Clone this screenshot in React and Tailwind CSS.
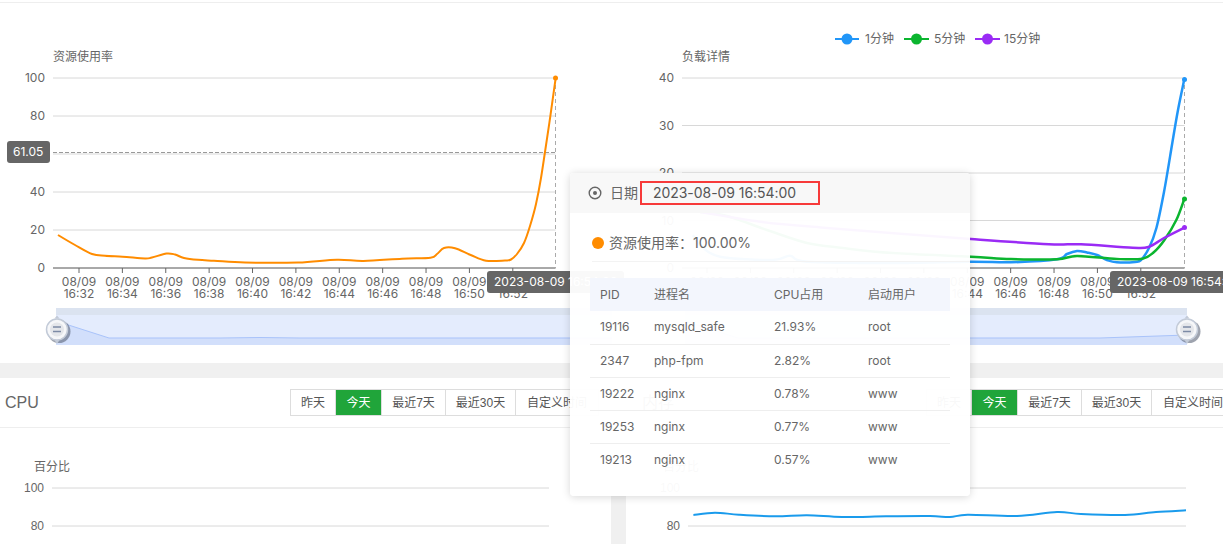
const smooth = (pts) => {
  let d = `M${pts[0][0]} ${pts[0][1]}`;
  for (let i = 0; i < pts.length - 1; i++) {
    const p0 = pts[i - 1] || pts[i];
    const p1 = pts[i];
    const p2 = pts[i + 1];
    const p3 = pts[i + 2] || p2;
    const c1x = p1[0] + (p2[0] - p0[0]) / 6;
    const c1y = p1[1] + (p2[1] - p0[1]) / 6;
    const c2x = p2[0] - (p3[0] - p1[0]) / 6;
    const c2y = p2[1] - (p3[1] - p1[1]) / 6;
    d += ` C${c1x.toFixed(1)} ${c1y.toFixed(1)} ${c2x.toFixed(1)} ${c2y.toFixed(1)} ${p2[0]} ${p2[1]}`;
  }
  return d;
};

const orange = [[58,235],[75,245],[92,254],[105,255.8],[122.5,256.7],[145,258.5],[152,257.5],[166.5,253.5],[175,254.5],[184,258],[198,259.8],[214,260.7],[245,262.5],[298,262.5],[337,259.7],[363.5,261],[402,258.7],[430.5,257.7],[437,254],[444,248],[455,248.3],[470.7,255],[486,260.7],[505,260.5],[511,259.5],[517,254],[524,243],[530,226],[536,204],[541,178],[545.3,150],[550.5,115],[555.7,78]];
const blue = [[693,235],[700,245],[720,256.7],[773,260],[790,255.7],[806.7,261.7],[893,263],[970.8,261.7],[1011,262.3],[1057,259.3],[1067,254],[1077,251],[1087,252.5],[1097,255],[1107,260],[1116.7,262.3],[1135,262],[1141,260],[1149,248],[1156.4,228],[1164,192],[1172.3,143],[1178,110],[1184.3,79.3]];
const green = [[700,212],[727,216],[767,230],[807,243],[843,248],[893,253],[971,256.7],[1011,259],[1057,259.3],[1077,256],[1116.7,259],[1142.5,258.7],[1154,252],[1164.4,240],[1176.3,220],[1184.3,199]];
const purple = [[700,212],[760,221.7],[827,228],[971,239],[1049,244.3],[1081,244.3],[1132.6,247.7],[1148.5,247],[1164,238],[1184.3,227.7]];
const mem = [[693.4,515],[715,512.7],[739,514.7],[775,516.3],[807,515.3],[842,517],[886,516.3],[930,516],[950,517],[967.6,514.7],[1017,516],[1057,512],[1081,514],[1125,515],[1156,512],[1186,510.3]];

const TICK = "#d8d8d8";
const TXT = "#666";
const times = ["16:32","16:34","16:36","16:38","16:40","16:42","16:44","16:46","16:48","16:50","16:52"];

function Axis({ x0, x1, first, labels, pointerX }) {
  return (
    <g>
      {labels.map(([v, y]) => (
        <g key={v}>
          <line x1={x0} x2={x1} y1={y} y2={y} stroke={TICK} strokeWidth="1" />
          <text x={x0 - 8} y={y + 4} textAnchor="end" fontSize="12" fill={TXT}>{v}</text>
        </g>
      ))}
      <line x1={x0} x2={x1} y1="268" y2="268" stroke="#666" strokeWidth="1" />
      {times.map((t, i) => {
        const x = first + i * 43.38;
        return (
          <g key={t}>
            <line x1={x} x2={x} y1="268" y2="273" stroke="#666" />
            <text x={x} y="286" textAnchor="middle" fontSize="12" fill={TXT}>08/09</text>
            <text x={x} y="298" textAnchor="middle" fontSize="12" fill={TXT}>{t}</text>
          </g>
        );
      })}
      <line x1={pointerX} x2={pointerX} y1="78" y2="268" stroke="#aaa" strokeDasharray="4 3" />
    </g>
  );
}

function Handle({ x }) {
  return (
    <g>
      <circle cx={x + 2} cy="331.5" r="11.5" fill="#4f586b" opacity="0.55" />
      <path d={`M${x - 2.5} 318.5 L${x + 2.5} 318.5 L${x} 315.5 Z`} fill="#c3cbd8" />
      <path d={`M${x - 2.5} 340 L${x + 2.5} 340 L${x} 344 Z`} fill="#c3cbd8" />
      <circle cx={x} cy="329.5" r="10.5" fill="#f6f7f9" stroke="#c3cbd8" strokeWidth="1.5" />
      <circle cx={x} cy="329.5" r="7" fill="#e4e6ea" />
      <line x1={x - 4} x2={x + 4} y1="327" y2="327" stroke="#7c8aa5" strokeWidth="1.5" />
      <line x1={x - 4} x2={x + 4} y1="331.5" y2="331.5" stroke="#7c8aa5" strokeWidth="1.5" />
    </g>
  );
}

function Slider({ x0, x1, shape }) {
  return (
    <g>
      <rect x={x0} y="308" width={x1 - x0} height="7" fill="#dbe3f0" />
      <rect x={x0} y="315" width={x1 - x0} height="30" fill="#e4ecfd" />
      <path d={`${shape} L${x1} 345 L${x0} 345 Z`} fill="#d2dffb" />
      <path d={shape} fill="none" stroke="#a9c3fa" strokeWidth="1" />
    </g>
  );
}

function PointerLabel({ x, y, w, h, text, tx }) {
  return (
    <g>
      <rect x={x} y={y} width={w} height={h} rx="3" fill="#666" />
      <text x={tx} y={y + 15} fontSize="12" fill="#fff">{text}</text>
    </g>
  );
}

function LeftChart() {
  return (
    <svg viewBox="0 3 612 360" className="block w-[612px] h-[360px] overflow-visible shrink-0">
      <text x="53" y="61" fontSize="12" fill={TXT}>资源使用率</text>
      <Axis x0={53} x1={555.5} first={79} pointerX={555.5} labels={[["100",78],["80",116],["60",154],["40",192],["20",230],["0",268]]} />
      <line x1="53" x2="555.5" y1="152.5" y2="152.5" stroke="#999" strokeDasharray="4 2" />
      <PointerLabel x={7} y={141} w={43} h={22} text="61.05" tx={13} />
      <path d={smooth(orange)} fill="none" stroke="#ff8c00" strokeWidth="2" />
      <circle cx="555.5" cy="78" r="2.5" fill="#ff8c00" />
      <PointerLabel x={487} y={271} w={137} h={22} text="2023-08-09 16:54:00" tx={494} />
      <Slider x0={56} x1={612} shape="M56 321 L109 338 L220 338 L260 337.5 L300 338 L612 338" />
      <Handle x={57} />
    </svg>
  );
}

function Legend() {
  const items = [
    [835, 859, 865, "#2196f8", "1分钟"],
    [904, 929, 934, "#0bb52f", "5分钟"],
    [975, 1000, 1004, "#9a2bf5", "15分钟"],
  ];
  return (
    <g>
      {items.map(([a, b, t, c, label]) => (
        <g key={label}>
          <line x1={a} x2={b} y1="39" y2="39" stroke={c} strokeWidth="2" />
          <circle cx={(a + b) / 2} cy="39" r="5.5" fill={c} />
          <text x={t} y="43" fontSize="12" fill={TXT}>{label}</text>
        </g>
      ))}
    </g>
  );
}

function RightChart() {
  return (
    <svg viewBox="612 3 611 360" className="block w-[611px] h-[360px] overflow-visible shrink-0">
      <Legend />
      <text x="682" y="61" fontSize="12" fill={TXT}>负载详情</text>
      <Axis x0={682} x1={1184.5} first={707} pointerX={1184.5} labels={[["40",78],["30",125.5],["20",173],["10",220.5],["0",268]]} />
      <path d={smooth(blue)} fill="none" stroke="#2196f8" strokeWidth="2.5" />
      <path d={smooth(green)} fill="none" stroke="#0bb52f" strokeWidth="2.5" />
      <path d={smooth(purple)} fill="none" stroke="#9a2bf5" strokeWidth="2.5" />
      <circle cx="1184.5" cy="79.5" r="2.5" fill="#2196f8" />
      <circle cx="1184.5" cy="199" r="2.5" fill="#0bb52f" />
      <circle cx="1184.5" cy="227.5" r="2.5" fill="#9a2bf5" />
      <PointerLabel x={1110} y={271} w={137} h={22} text="2023-08-09 16:54:00" tx={1117} />
      <Slider x0={685} x1={1187} shape="M685 321 L738 338 L1100 338 L1187 335" />
      <Handle x={1187} />
    </svg>
  );
}

function Tabs({ className }) {
  const tabs = [["昨天", "w-[45px]"], ["今天", "w-[46px]"], ["最近7天", "w-[64px]"], ["最近30天", "w-[70px]"], ["自定义时间", "w-[82px]"]];
  return (
    <div className={`flex h-[27px] border border-[#ddd] shrink-0 ${className}`}>
      {tabs.map(([t, w]) => (
        <div
          key={t}
          className={`${w} flex items-center justify-center text-xs shrink-0 border-r border-[#ddd] last:border-r-0 whitespace-nowrap ${t === "今天" ? "bg-[#20a53a] text-white" : "text-[#555]"}`}
        >
          {t}
        </div>
      ))}
    </div>
  );
}

function PanelHeader({ title, children, className }) {
  return (
    <div className={`flex items-center h-[50px] border-b border-[#eee] ${className}`}>
      <span className="text-base text-[#666]">{title}</span>
      {children}
    </div>
  );
}

function BottomLeft() {
  return (
    <div className="w-[611px] shrink-0">
      <PanelHeader title="CPU" className="pl-[5px]"><Tabs className="ml-auto mr-[12px] w-[309px]" /></PanelHeader>
      <svg viewBox="0 428 611 116" className="block w-[611px] h-[116px]">
        <text x="34" y="471" fontSize="12" fill={TXT}>百分比</text>
        {[["100",488],["80",526]].map(([v, y]) => (
          <g key={v}>
            <line x1="52" x2="549" y1={y} y2={y} stroke={TICK} />
            <text x="44" y={y + 4} textAnchor="end" fontSize="12" fill={TXT}>{v}</text>
          </g>
        ))}
      </svg>
    </div>
  );
}

function BottomRight() {
  return (
    <div className="flex-1 min-w-0 overflow-hidden">
      <PanelHeader title="内存" className="pl-[16px]"><Tabs className="ml-auto mr-[-12px] w-[309px]" /></PanelHeader>
      <svg viewBox="626 428 597 116" className="block w-[597px] h-[116px]">
        <text x="663" y="471" fontSize="12" fill={TXT}>百分比</text>
        {[["100",488],["80",526]].map(([v, y]) => (
          <g key={v}>
            <line x1="688" x2="1186" y1={y} y2={y} stroke={TICK} />
            <text x="680" y={y + 4} textAnchor="end" fontSize="12" fill={TXT}>{v}</text>
          </g>
        ))}
        <path d={smooth(mem)} fill="none" stroke="#1a9bec" strokeWidth="2" />
      </svg>
    </div>
  );
}

function Popup() {
  const rows = [
    ["19116", "mysqld_safe", "21.93%", "root"],
    ["2347", "php-fpm", "2.82%", "root"],
    ["19222", "nginx", "0.78%", "www"],
    ["19253", "nginx", "0.77%", "www"],
    ["19213", "nginx", "0.57%", "www"],
  ];
  return (
    <div className="absolute left-[570px] top-[173px] w-[400px] h-[323px] bg-white/[0.96] rounded shadow-[0_1px_8px_rgba(0,0,0,0.16)] text-[#666]">
      <div className="flex items-center h-[40px] pl-[18px] bg-[#f8f8f8] rounded-t">
        <svg width="14" height="14" viewBox="0 0 14 14" className="shrink-0">
          <circle cx="7" cy="7" r="5.8" fill="none" stroke="#666" strokeWidth="1.4" />
          <circle cx="7" cy="7" r="2" fill="#666" />
        </svg>
        <span className="ml-[8px] text-sm">日期</span>
        <span className="ml-[2px] w-[180px] h-[24px] border-2 border-[#f73a3a] pl-[11px] flex items-center text-sm tracking-[-0.05px] text-[#555]">2023-08-09 16:54:00</span>
      </div>
      <div className="ml-[22px] h-[49px] pt-[11px] flex items-center border-b border-[#f3f3f3] text-sm">
        <span className="w-[12px] h-[12px] rounded-full bg-[#ff8c00]" />
        <span className="ml-[5px]">资源使用率：</span>
        <span>100.00%</span>
      </div>
      <table className="ml-[20px] mt-[16px] w-[360px] table-fixed border-collapse text-xs text-[#666]">
        <colgroup>
          <col className="w-[64px]" />
          <col className="w-[120px]" />
          <col className="w-[94px]" />
          <col className="w-[82px]" />
        </colgroup>
        <thead>
          <tr className="h-[33px] bg-[#f3f6fd]">
            {["PID", "进程名", "CPU占用", "启动用户"].map((h) => (
              <th key={h} className={`text-left font-normal ${h === "PID" ? "pl-[10px]" : ""}`}>{h}</th>
            ))}
          </tr>
        </thead>
        <tbody>
          {rows.map((r) => (
            <tr key={r[0]} className="h-[33px] border-b border-[#eee] last:border-b-0">
              {r.map((c, i) => (
                <td key={i} className={i === 0 ? "pl-[10px]" : ""}>{c}</td>
              ))}
            </tr>
          ))}
        </tbody>
      </table>
    </div>
  );
}

export default function App() {
  return (
    <div className="relative w-[1223px] h-[544px] overflow-hidden bg-white font-['Inter','Noto_Sans_CJK_SC',sans-serif]">
      <div className="mt-[2px] border-t border-[#eee] h-[361px] flex">
        <LeftChart />
        <RightChart />
      </div>
      <div className="h-[15px] bg-[#f0f0f0]" />
      <div className="flex h-[166px] font-['Liberation_Sans','Noto_Sans_CJK_SC',sans-serif]">
        <BottomLeft />
        <div className="w-[15px] shrink-0 bg-[#f0f0f0]" />
        <BottomRight />
      </div>
      <Popup />
    </div>
  );
}
